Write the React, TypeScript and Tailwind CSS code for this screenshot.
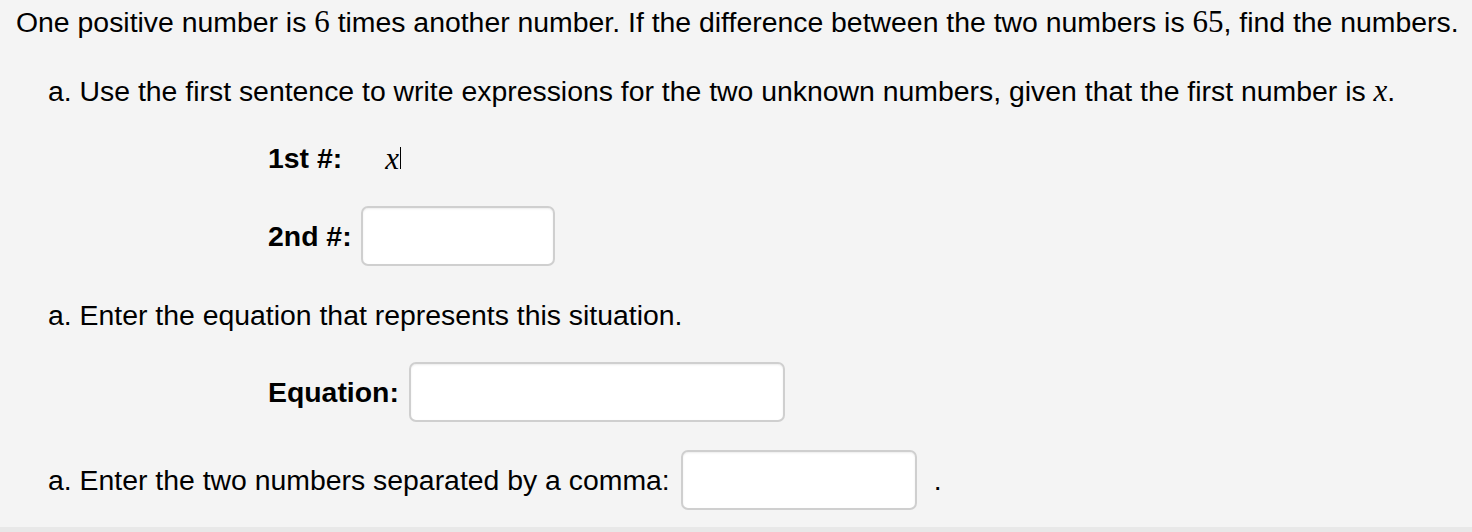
import React from "react";

const sans = { fontFamily: '"Liberation Sans", Arial, sans-serif' };

function MathText({ children, italic }: { children: React.ReactNode; italic?: boolean }) {
  return (
    <span
      className={
        "font-['Liberation_Serif',serif] text-[31px] leading-none " + (italic ? "italic" : "")
      }
    >
      {children}
    </span>
  );
}

function AnswerBox({ className }: { className: string }) {
  return (
    <div
      className={
        "rounded-[7px] border-2 border-[#cfcfcf] bg-white shadow-[inset_0_1px_2px_rgba(0,0,0,0.08)] " +
        className
      }
    />
  );
}

export default function App() {
  return (
    <div
      className="w-[1472px] h-[532px] bg-[#f4f4f4] text-black text-[28.4px] flex flex-col"
      style={sans}
    >
      {/* question */}
      <div className="h-[44px] flex items-center pl-[16px] whitespace-nowrap">
        <span>
          One positive number is <MathText>6</MathText> times another number. If the difference between the two numbers is <MathText>65</MathText>, find the numbers.
        </span>
      </div>

      {/* part a */}
      <div className="mt-[25px] h-[44px] flex items-center pl-[48px] whitespace-nowrap">
        <span>
          a. Use the first sentence to write expressions for the two unknown numbers, given that the first number is{" "}
          <MathText italic>x</MathText>.
        </span>
      </div>

      <div className="mt-[23px] h-[44px] flex items-center pl-[268px]">
        <span className="font-bold">1st #:</span>
        <span className="ml-[43px] flex items-center">
          <MathText italic>x</MathText>
          <span className="ml-[1px] w-[1px] h-[22px] bg-black" />
        </span>
      </div>

      <div className="mt-[26px] h-[60px] flex items-center pl-[268px]">
        <span className="font-bold">2nd #:</span>
        <AnswerBox className="ml-[9px] w-[194px] h-[60px]" />
      </div>

      <div className="mt-[27px] h-[44px] flex items-center pl-[48px]">
        <span>a. Enter the equation that represents this situation.</span>
      </div>

      <div className="mt-[25px] h-[60px] flex items-center pl-[268px]">
        <span className="font-bold">Equation:</span>
        <AnswerBox className="ml-[10px] w-[376px] h-[60px]" />
      </div>

      <div className="mt-[28px] h-[60px] flex items-center pl-[48px]">
        <span>a. Enter the two numbers separated by a comma:</span>
        <AnswerBox className="ml-[11px] w-[236px] h-[60px]" />
        <span className="ml-[17px]">.</span>
      </div>

      <div className="mt-auto h-[5px] bg-[#e8e8e8]" />
    </div>
  );
}
